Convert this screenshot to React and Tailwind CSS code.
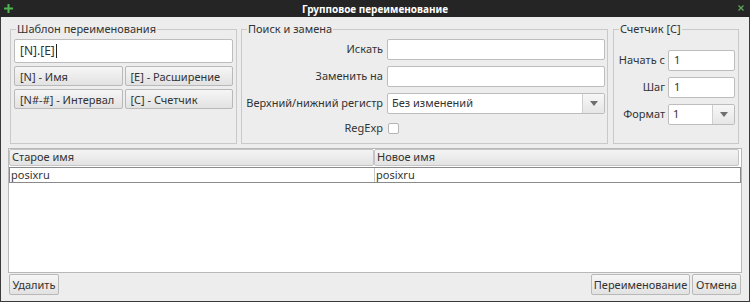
import React from "react";

const font = { fontFamily: '"Noto Sans", "Open Sans", sans-serif' };

function Btn({ children, className = "" }) {
  return (
    <div
      className={
        "flex items-center rounded-[2px] border border-[#b9b9b9] bg-gradient-to-b from-[#f6f6f6] to-[#e2e2e2] px-[5px] text-[11px] leading-none text-[#333] " +
        className
      }
    >
      {children}
    </div>
  );
}

function Input({ children, className = "" }) {
  return (
    <div
      className={
        "flex items-center rounded-[2px] border border-[#bdbdbd] bg-white px-[5px] text-[11px] text-[#333] " +
        className
      }
    >
      {children}
    </div>
  );
}

function Combo({ value, className = "", btnW = "w-[22px]" }) {
  return (
    <div className={"flex rounded-[2px] border border-[#bdbdbd] bg-white text-[11px] text-[#333] " + className}>
      <div className="flex flex-1 items-center px-[4px]">{value}</div>
      <div className={"flex items-center justify-center border-l border-[#cfcfcf] bg-gradient-to-b from-[#f7f7f7] to-[#e6e6e6] " + btnW}>
        <svg width="8" height="5" viewBox="0 0 8 5">
          <path d="M0 0H8L4 5Z" fill="#6f6f6f" />
        </svg>
      </div>
    </div>
  );
}

function Group({ title, className = "", children }) {
  return (
    <div className={"relative border border-[#c9c9c9] " + className}>
      <span className="absolute left-[5px] top-[-8px] bg-[#ededed] px-[1px] text-[11px] leading-[14px] text-[#333]">
        {title}
      </span>
      {children}
    </div>
  );
}

export default function App() {
  return (
    <div style={font} className="flex h-[302px] w-[750px] flex-col bg-[#3a3a3a]">
      <div className="relative flex h-[17px] items-center justify-center bg-[#252525]">
        <svg className="absolute left-[4px] top-[4px]" width="9" height="9" viewBox="0 0 9 9">
          <path d="M4.5 0V9M0 4.5H9" stroke="#4fb34f" strokeWidth="2" />
        </svg>
        <span className="text-[10px] font-bold leading-none text-white">Групповое переименование</span>
        <svg className="absolute right-[6px] top-[5px]" width="6" height="6" viewBox="0 0 6 6">
          <path d="M0.5 0.5L5.5 5.5M5.5 0.5L0.5 5.5" stroke="#5fa85f" strokeWidth="1.2" />
        </svg>
      </div>
      <div className="mx-[1px] mb-[1px] flex flex-1 flex-col bg-[#ededed] pt-[12px]">
        <div className="flex h-[115px] pl-[9px]">
          <Group title="Шаблон переименования" className="w-[227px]">
            <div className="flex flex-col px-[3px] pt-[9px]">
              <Input className="h-[24px] border-[#8eabcc]">
                <span className="text-[12px]">[N].[E]</span>
                <span className="ml-[1px] h-[14px] w-[1px] bg-[#222]" />
              </Input>
              <div className="mt-[3px] grid grid-cols-2 gap-x-[2px] gap-y-[3px]">
                <Btn className="h-[20px]">[N] - Имя</Btn>
                <Btn className="h-[20px]">[E] - Расширение</Btn>
                <Btn className="h-[20px]">[N#-#] - Интервал</Btn>
                <Btn className="h-[20px]">[C] - Счетчик</Btn>
              </div>
            </div>
          </Group>
          <Group title="Поиск и замена" className="ml-[4px] w-[367px]">
            <div className="grid grid-cols-[141px_218px] gap-x-[4px] pt-[9px]">
              <div className="flex h-[21px] items-center justify-end text-[11px] text-[#333]">Искать</div>
              <Input className="h-[21px]" />
              <div className="mt-[6px] flex h-[21px] items-center justify-end text-[11px] text-[#333]">Заменить на</div>
              <Input className="mt-[6px] h-[21px]" />
              <div className="mt-[6px] flex h-[21px] items-center justify-end text-[11px] text-[#333]">Верхний/нижний регистр</div>
              <Combo className="mt-[6px] h-[21px]" value="Без изменений" />
              <div className="mt-[8px] flex h-[12px] items-center justify-end text-[11px] text-[#333]">RegExp</div>
              <div className="mt-[9px] flex h-[11px] items-center pl-[1px]">
                <div className="h-[11px] w-[11px] rounded-[2px] border border-[#b5b5b5] bg-white" />
              </div>
            </div>
          </Group>
          <Group title="Счетчик [C]" className="ml-[5px] w-[126px]">
            <div className="grid grid-cols-[51px_67px] gap-x-[3px] pt-[20px]">
              <div className="flex h-[21px] items-center justify-end text-[11px] text-[#333]">Начать с</div>
              <Input className="h-[21px]">1</Input>
              <div className="mt-[6px] flex h-[21px] items-center justify-end text-[11px] text-[#333]">Шаг</div>
              <Input className="mt-[6px] h-[21px]">1</Input>
              <div className="mt-[6px] flex h-[21px] items-center justify-end text-[11px] text-[#333]">Формат</div>
              <Combo className="mt-[6px] h-[21px]" value="1" />
            </div>
          </Group>
        </div>
        <div className="mx-[7px] mt-[4px] flex h-[125px] flex-col border border-[#b8b8b8] bg-white">
          <div className="flex h-[17px]">
            <div className="flex w-[365px] items-center rounded-[2px] border border-[#c4c4c4] bg-gradient-to-b from-[#f4f4f4] to-[#e3e3e3] px-[2px] text-[11px] text-[#333]">
              Старое имя
            </div>
            <div className="mr-[2px] flex flex-1 items-center rounded-[2px] border border-[#c4c4c4] bg-gradient-to-b from-[#f4f4f4] to-[#e3e3e3] px-[2px] text-[11px] text-[#333]">
              Новое имя
            </div>
          </div>
          <div className="mt-[1px] flex h-[16px] border border-[#8a8a8a]">
            <div className="flex w-[364px] items-center px-[1px] text-[11px] text-[#333]">posixru</div>
            <div className="flex flex-1 items-center border-l border-[#c8c8c8] px-[1px] text-[11px] text-[#333]">posixru</div>
          </div>
        </div>
        <div className="mx-[8px] mt-[1px] flex h-[21px]">
          <Btn className="h-[21px] w-[50px] justify-center px-0">Удалить</Btn>
          <div className="flex-1" />
          <Btn className="h-[21px] w-[99px] justify-center border-[#9fb3c8] from-[#dce8f4] to-[#c6d8ea] px-0">Переименование</Btn>
          <Btn className="ml-[2px] h-[21px] w-[49px] justify-center px-0">Отмена</Btn>
        </div>
      </div>
    </div>
  );
}
